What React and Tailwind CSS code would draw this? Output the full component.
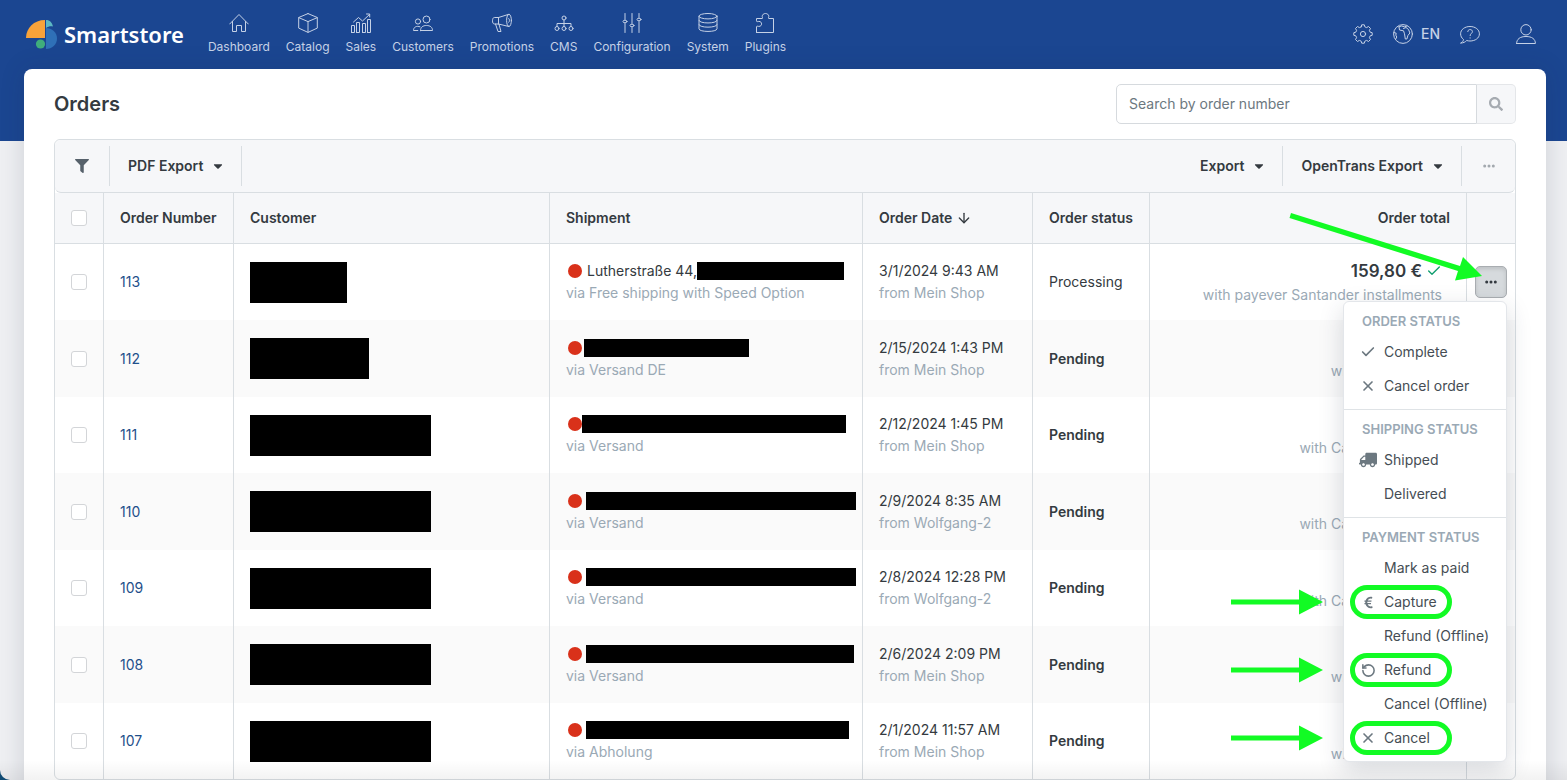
import React, { useState } from 'react';
import { ArrowDown, Check, RotateCcw, X } from 'lucide-react';
import { FaCaretDown, FaEuroSign, FaFilter, FaSearch, FaTruck } from 'react-icons/fa';

const NavIcon = ({ children, size = 20 }) => (
  <svg
    width={size}
    height={size}
    viewBox="0 0 20 20"
    fill="none"
    stroke="currentColor"
    strokeLinecap="round"
    strokeLinejoin="round"
    aria-hidden="true"
  >
    {children}
  </svg>
);

const navItems = [
  {
    label: 'Dashboard',
    icon: <path d="M.7 11 10 1.500l9.300 9.500M3.500 8.500v10h4v-6h5v6h4v-10" />,
  },
  {
    label: 'Catalog',
    icon: <path d="M10 .6 19.300 4.500v10.600L10 19.400.7 15.100V4.500L10 .6ZM.9 4.700 10 8.600l9.100-3.900M10 8.600v10.600" />,
  },
  {
    label: 'Sales',
    icon: <path d="M.5 19.500v-7h3v7h-3ZM5.500 19.500v-10h3v10h-3ZM11.500 19.500v-9h3v9h-3ZM16.500 19.500v-13h3v13h-3ZM2.500 9l5-4.500 4 3.500 7-6.500M15.500 1h3.200v3" />,
  },
  {
    label: 'Customers',
    icon: (
      <>
        <circle cx="13.500" cy="6.500" r="3.500" />
        <circle cx="5" cy="8.500" r="2.600" />
        <path d="M7.500 17.500c0-3.400 2.500-5 6-5s6 1.600 6 5h-12ZM7 13.800c-3.500-1.400-6.500.3-6.500 3.700h4.300" />
      </>
    ),
  },
  {
    label: 'Promotions',
    icon: (
      <>
        <path d="M16.800 1.300 6.500 4.500H2.300c-2.400 0-2.400 6.500 0 6.500h4.200l10.300 2.500M6.500 4.500V11M3.500 11l2.500 7.500h3L7 11.300" />
        <ellipse cx="17" cy="7.400" rx="2.400" ry="6.100" />
        <path d="M16.800 5.500c1 .8 1 3 0 3.800" />
      </>
    ),
  },
  {
    label: 'CMS',
    icon: (
      <>
        <circle cx="10" cy="5" r="2" />
        <circle cx="3" cy="15.500" r="2" />
        <circle cx="10" cy="15.500" r="2" />
        <circle cx="17" cy="15.500" r="2" />
        <path d="M10 7v6.500M3 13.500v-3h14v3" />
      </>
    ),
  },
  {
    label: 'Configuration',
    icon: (
      <>
        <path d="M3 .5v6M3 10.500v9M10 .5v10M10 14.500v5M17 .5v4M17 8.500v11" />
        <ellipse cx="3" cy="8.500" rx="2" ry="1.300" />
        <ellipse cx="10" cy="12.500" rx="2" ry="1.300" />
        <ellipse cx="17" cy="6.500" rx="2" ry="1.300" />
      </>
    ),
  },
  {
    label: 'System',
    icon: (
      <>
        <ellipse cx="10" cy="3.200" rx="9" ry="2.700" />
        <path d="M1 3.200v12.600c0 3.500 18 3.500 18 0V3.200M1 7.500c0 3.400 18 3.400 18 0M1 11.700c0 3.400 18 3.400 18 0" />
      </>
    ),
  },
  {
    label: 'Plugins',
    icon: (
      <path d="M1.500 19.500V14c0-1.400 1.500-.6 2.400-.6 3.600 0 3.600-5 0-5-.9 0-2.400.8-2.400-.6V5.500H7c1.200 0 .2-1.300.2-2 0-4 6.600-4 6.600 0 0 .7-1 2 .2 2h4.500v14h-17Z" />
    ),
  },
];

const GearIcon = () => (
  <NavIcon>
    <path d="M8.200 2.800 8.700.8h2.600l.5 2 1.800.8 1.900-1.100 2 2-1.100 1.900.8 1.800 2 .5v2.600l-2 .5-.8 1.800 1.100 1.900-2 2-1.900-1.100-1.800.8-.5 2H8.700l-.5-2-1.800-.8-1.900 1.100-2-2 1.100-1.900-.8-1.800-2-.5V8.700l2-.5.8-1.800-1.100-1.900 2-2 1.900 1.100 1.800-.8Z" />
    <circle cx="10" cy="10" r="2.600" />
  </NavIcon>
);

const GlobeIcon = () => (
  <NavIcon>
    <circle cx="10" cy="10" r="9.400" />
    <path d="M6 2.800 8.500 2l3 .8L14 2M6 2.800 6.500 6l4 .8 1 3 .8 5.200h1.600l1-3.500 2-2.500-1.400-3.500L13 3.500l-2.500 1M.8 8.500l2.400.7-.4 2 1 1.800-1 2" />
  </NavIcon>
);

const HelpIcon = () => (
  <NavIcon>
    <path d="M1 19c1.500-.8 2.300-2 2.500-3.500C1.600 14 .6 12 .6 9.800.6 5.500 4.800 2.500 10 2.500s9.400 3 9.400 7.300-4.200 7.200-9.400 7.200c-1.200 0-2.300-.2-3.300-.5C5.300 18 3.500 19 1 19Z" />
    <path d="M7.800 7.600c0-2.900 4.600-2.700 4.600 0 0 1.900-2.300 1.800-2.300 4M10.100 13.800v.3" />
  </NavIcon>
);

const UserIcon = () => (
  <NavIcon>
    <circle cx="10" cy="5.800" r="5.200" />
    <path d="M.6 19.500c0-4.500 3.500-7 9.400-7s9.400 2.500 9.400 7H.6Z" />
  </NavIcon>
);

const LogoMark = () => (
  <svg width="31" height="29" viewBox="0 0 31 29" aria-hidden="true">
    <path d="M0 18C0 8 8 0 19 0v18H0Z" fill="#f8a33a" />
    <path d="M20 0c4 0 6 2.500 7 6.500-2.500-.4-5 0-7 1.500V0Z" fill="#5cb8c4" />
    <path d="M20 8c6 0 11 4.500 11 10.500S26 29 20 29V8Z" fill="#2f70b7" />
    <circle cx="14.500" cy="24" r="4.600" fill="#3fae7c" />
  </svg>
);

const Dots = () => (
  <svg width="12" height="4" viewBox="0 0 12 4" fill="currentColor" aria-hidden="true">
    <circle cx="1.700" cy="2" r="1.500" />
    <circle cx="6" cy="2" r="1.500" />
    <circle cx="10.300" cy="2" r="1.500" />
  </svg>
);

const orders = [
  { id: 113, name: 'w-[97px]', street: 'Lutherstraße 44,', mask: 'w-[147px]', via: 'Free shipping with Speed Option', date: '3/1/2024 9:43 AM', store: 'Mein Shop', status: 'Processing', total: '159,80 €', payment: 'payever Santander installments' },
  { id: 112, name: 'w-[119px]', mask: 'ml-[2px] w-[165px]', via: 'Versand DE', date: '2/15/2024 1:43 PM', store: 'Mein Shop', status: 'Pending', payment: 'Prepayment' },
  { id: 111, name: 'w-[181px]', mask: 'w-[264px]', via: 'Versand', date: '2/12/2024 1:45 PM', store: 'Mein Shop', status: 'Pending', payment: 'Cash on delivery' },
  { id: 110, name: 'w-[181px]', mask: 'ml-1 w-[270px]', via: 'Versand', date: '2/9/2024 8:35 AM', store: 'Wolfgang-2', status: 'Pending', payment: 'Cash on delivery' },
  { id: 109, name: 'w-[181px]', mask: 'ml-1 w-[270px]', via: 'Versand', date: '2/8/2024 12:28 PM', store: 'Wolfgang-2', status: 'Pending', payment: 'Cash on delivery' },
  { id: 108, name: 'w-[181px]', mask: 'ml-1 w-[268px]', via: 'Versand', date: '2/6/2024 2:09 PM', store: 'Mein Shop', status: 'Pending', payment: 'Prepayment' },
  { id: 107, name: 'w-[181px]', mask: 'ml-1 w-[263px]', via: 'Abholung', date: '2/1/2024 11:57 AM', store: 'Mein Shop', status: 'Pending', payment: 'Prepayment' },
];

const menuGroups = [
  {
    title: 'Order status',
    items: [
      { label: 'Complete', icon: <Check size={16} strokeWidth={2.5} /> },
      { label: 'Cancel order', icon: <X size={16} strokeWidth={2.5} /> },
    ],
  },
  {
    title: 'Shipping status',
    items: [
      { label: 'Shipped', icon: <FaTruck size={18} className="-scale-x-100" /> },
      { label: 'Delivered' },
    ],
  },
  {
    title: 'Payment status',
    items: [
      { label: 'Mark as paid' },
      { label: 'Capture', icon: <FaEuroSign size={13} />, marked: true },
      { label: 'Refund (Offline)' },
      { label: 'Refund', icon: <RotateCcw size={15} strokeWidth={2.5} />, marked: true },
      { label: 'Cancel (Offline)' },
      { label: 'Cancel', icon: <X size={16} strokeWidth={2.5} />, marked: true },
    ],
  },
];

const Marker = () => (
  <>
    <span className="pointer-events-none absolute inset-y-0 left-[6px] w-[102px] rounded-full border-[5px] border-[#12fb24]" />
    <svg
      className="pointer-events-none absolute top-1 right-full mr-[21px]"
      width="92"
      height="26"
      viewBox="0 0 92 26"
      fill="#12fb24"
      aria-hidden="true"
    >
      <path d="M0 10.500h68V.5L92 13 68 25.500v-10H0Z" />
    </svg>
  </>
);

const OrderMenu = () => (
  <div className="absolute top-[35px] right-0 z-10 w-[164px] rounded-md border border-[#e3e6ea] bg-white py-[6px] text-left shadow-[0_8px_24px_rgba(40,50,70,0.18)]">
    {menuGroups.map((group, index) => (
      <div key={group.title} className={index > 0 ? 'mt-[6px] border-t border-[#dfe3e6] pt-[6px]' : ''}>
        <h6 className="px-[18px] text-[13px] leading-[27px] font-semibold text-[#9aa9b5] uppercase">{group.title}</h6>
        {group.items.map((item) => (
          <button key={item.label} type="button" className="relative flex h-[34px] w-full items-center text-[#454d54]">
            <span className="ml-[14px] flex w-5 shrink-0 justify-center text-[#6c7880]">{item.icon}</span>
            <span className="ml-[6px] whitespace-nowrap">{item.label}</span>
            {item.marked && <Marker />}
          </button>
        ))}
      </div>
    ))}
  </div>
);

const ToolButton = ({ children }) => (
  <button type="button" className="flex items-center gap-2 pr-4 pl-[18px] font-semibold">
    {children}
    <FaCaretDown size={14} />
  </button>
);

const checkboxClass =
  'block size-4 mx-auto appearance-none rounded-[3px] border border-[#d3d5d8] bg-white checked:bg-[#1b4691]';

const App = () => {
  const [openId, setOpenId] = useState(113);

  return (
    <div className="h-screen overflow-hidden bg-[#0f4a73] font-['Inter','Liberation_Sans',sans-serif] text-sm text-[#343a40]">
      <div className="relative h-full overflow-hidden rounded-bl-[10px] bg-[#eeeff2]">
        <header className="h-[141px] bg-[#1b4691] text-[#c5d1e6]">
          <div className="flex h-[67px] items-center pr-[31px] pl-[26px]">
            <a href="#home" className="flex items-center gap-[7px] pt-[2px] font-['Noto_Sans',sans-serif] text-[22px] font-semibold text-white">
              <LogoMark />
              Smartstore
            </a>
            <nav className="ml-6 flex gap-4 text-xs">
              {navItems.map((item) => (
                <a key={item.label} href={`#${item.label.toLowerCase()}`} className="flex flex-col items-center gap-[6px]">
                  <NavIcon>{item.icon}</NavIcon>
                  {item.label}
                </a>
              ))}
            </nav>
            <div className="ml-auto flex items-center">
              <button type="button" aria-label="Settings"><GearIcon /></button>
              <button type="button" className="ml-5 flex items-center gap-2 font-medium"><GlobeIcon />EN</button>
              <button type="button" aria-label="Help" className="ml-5"><HelpIcon /></button>
              <button type="button" aria-label="Account" className="ml-9"><UserIcon /></button>
            </div>
          </div>
        </header>

        <main className="mr-[21px] ml-6 -mt-[72px] rounded-t-lg bg-white px-[30px] pt-[15px] pb-8 shadow-[0_0_24px_rgba(30,40,70,0.15)]">
          <div className="flex h-10 items-center justify-between">
            <h1 className="text-xl font-semibold">Orders</h1>
            <form className="flex h-10 w-[400px]" onSubmit={(e) => e.preventDefault()}>
              <input
                type="search"
                aria-label="Search by order number"
                placeholder="Search by order number"
                className="min-w-0 flex-1 rounded-l-[5px] border border-[#d6dade] px-3 placeholder:text-[#6c7880]"
              />
              <button type="submit" aria-label="Search" className="flex w-[39px] items-center justify-center rounded-r-[5px] border border-l-0 border-[#e4e6e9] bg-[#f6f7f9] text-[#a6abb1]">
                <FaSearch size={14} />
              </button>
            </form>
          </div>

          <section className="mt-[15px] rounded-md border border-[#d9dee2]">
            <div className="flex h-[53px] rounded-md border-b border-[#d9dee2] bg-[#f6f7f9] py-[6px]">
              <button type="button" aria-label="Filter" className="flex w-[55px] items-center justify-center border-r border-[#d9dee2] text-[#56616b]">
                <FaFilter size={14} />
              </button>
              <div className="flex border-r border-[#d9dee2]"><ToolButton>PDF Export</ToolButton></div>
              <div className="ml-auto flex border-r border-[#d9dee2]"><ToolButton>Export</ToolButton></div>
              <div className="flex border-r border-[#d9dee2]"><ToolButton>OpenTrans Export</ToolButton></div>
              <button type="button" aria-label="More" className="flex w-[53px] items-center justify-center text-[#a3a9af]"><Dots /></button>
            </div>

            <table className="w-full table-fixed border-separate border-spacing-0">
              <colgroup>
                <col className="w-[49px]" />
                <col className="w-[130px]" />
                <col className="w-[316px]" />
                <col className="w-[313px]" />
                <col className="w-[170px]" />
                <col className="w-[117px]" />
                <col />
                <col className="w-12" />
              </colgroup>
              <thead>
                <tr className="h-[51px] bg-[#f6f7f9] text-left whitespace-nowrap *:border-b *:border-[#d9dee2] *:font-semibold [&>th:not(:last-child)]:border-r">
                  <th><input type="checkbox" aria-label="Select all orders" className={checkboxClass} /></th>
                  <th className="pl-4">Order Number</th>
                  <th className="pl-4">Customer</th>
                  <th className="pl-4">Shipment</th>
                  <th className="pl-4">
                    <span className="flex items-center gap-1">Order Date <ArrowDown size={16} /></span>
                  </th>
                  <th className="pl-4">Order status</th>
                  <th className="pr-4 text-right">Order total</th>
                  <th aria-label="Actions" />
                </tr>
              </thead>
              <tbody className="leading-[22px]">
                {orders.map((order) => (
                  <tr
                    key={order.id}
                    className="odd:h-[76px] even:h-[77px] even:bg-[#fafafa] *:border-[#d9dee2] [&>td:not(:last-child)]:border-r"
                  >
                    <td><input type="checkbox" aria-label={`Select order ${order.id}`} className={checkboxClass} /></td>
                    <td className="pl-4"><a href={`#order-${order.id}`} className="text-[#1f4f8a]">{order.id}</a></td>
                    <td className="pl-4"><div className={`h-[41px] bg-black ${order.name}`} /></td>
                    <td className="pl-4 whitespace-nowrap">
                      <div className="flex h-[22px] items-center">
                        <span className="ml-[2px] size-[14px] shrink-0 rounded-full bg-[#d9311a]" />
                        {order.street && <span className="ml-[5px]">{order.street}</span>}
                        <span className={`h-[18px] shrink-0 bg-black ${order.mask}`} />
                      </div>
                      <div className="text-[#9aa9b5]">via {order.via}</div>
                    </td>
                    <td className="pl-4 whitespace-nowrap">
                      <div>{order.date}</div>
                      <div className="text-[#9aa9b5]">from {order.store}</div>
                    </td>
                    <td className={order.status === 'Pending' ? 'pl-4 font-semibold' : 'pl-4'}>{order.status}</td>
                    <td className="pr-6 text-right whitespace-nowrap">
                      <div className="flex h-[25px] items-center justify-end gap-1 text-[17px] font-semibold">
                        {order.total}
                        {order.total && <Check size={16} className="text-[#0f9d6e]" />}
                      </div>
                      <div className="text-[#9aa9b5]">with {order.payment}</div>
                    </td>
                    <td>
                      {order.id === 113 && (
                        <div className="relative mx-auto size-8">
                          <button
                            type="button"
                            aria-label="Order actions"
                            aria-expanded={openId === order.id}
                            onClick={() => setOpenId(openId === order.id ? null : order.id)}
                            className="flex size-8 items-center justify-center rounded-[5px] border border-[#a9adb1] bg-[#d6dadd] shadow-[inset_0_2px_4px_rgba(0,0,0,0.12)]"
                          >
                            <Dots />
                          </button>
                          {openId === order.id && <OrderMenu />}
                          <svg
                            className="pointer-events-none absolute right-[25px] bottom-[17px] z-20"
                            width="194"
                            height="70"
                            viewBox="0 0 194 70"
                            fill="#12fb24"
                            aria-hidden="true"
                          >
                            <path d="M3 2 1.500 7 170 60l-3 9.500 27-4.500-19-19-3 9L3 2Z" />
                          </svg>
                        </div>
                      )}
                    </td>
                  </tr>
                ))}
              </tbody>
            </table>
          </section>
        </main>
        <div className="pointer-events-none absolute inset-x-0 bottom-0 h-5 bg-linear-to-t from-black/5 to-transparent" />
      </div>
    </div>
  );
};

export default App;
